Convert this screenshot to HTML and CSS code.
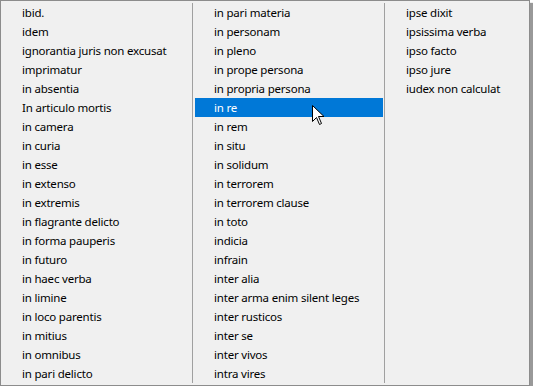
FILE: index.html
```html
<!DOCTYPE html>
<html lang="en">
<head>
    <meta charset="UTF-8">
    <title>Latin Terms</title>
    <link rel="stylesheet" href="styles.css">
</head>
<body>

<div class="listbox">
    <ul class="column">
        <li>ibid.</li>
        <li>idem</li>
        <li>ignorantia juris non excusat</li>
        <li>imprimatur</li>
        <li>in absentia</li>
        <li>In articulo mortis</li>
        <li>in camera</li>
        <li>in curia</li>
        <li>in esse</li>
        <li>in extenso</li>
        <li>in extremis</li>
        <li>in flagrante delicto</li>
        <li>in forma pauperis</li>
        <li>in futuro</li>
        <li>in haec verba</li>
        <li>in limine</li>
        <li>in loco parentis</li>
        <li>in mitius</li>
        <li>in omnibus</li>
        <li>in pari delicto</li>
    </ul>
    <ul class="column">
        <li>in pari materia</li>
        <li>in personam</li>
        <li>in pleno</li>
        <li>in prope persona</li>
        <li>in propria persona</li>
        <li class="selected">in re</li>
        <li>in rem</li>
        <li>in situ</li>
        <li>in solidum</li>
        <li>in terrorem</li>
        <li>in terrorem clause</li>
        <li>in toto</li>
        <li>indicia</li>
        <li>infrain</li>
        <li>inter alia</li>
        <li>inter arma enim silent leges</li>
        <li>inter rusticos</li>
        <li>inter se</li>
        <li>inter vivos</li>
        <li>intra vires</li>
    </ul>
    <ul class="column last">
        <li>ipse dixit</li>
        <li>ipsissima verba</li>
        <li>ipso facto</li>
        <li>ipso jure</li>
        <li>iudex non calculat</li>
    </ul>

    <!-- mouse pointer over the selected row -->
    <svg class="cursor" width="13" height="21" viewBox="0 0 13 21">
        <path d="M0.5 0.5 L0.5 16.5 L4.5 12.5 L7.5 19.5 L9.5 18.5 L6.5 11.5 L12 11.5 Z"
              fill="#fff" stroke="#000" stroke-width="1" stroke-linejoin="miter"/>
    </svg>
</div>

</body>
</html>
```

FILE: styles.css
```css
body {
    margin: 0;
    background-color: #ffffff;
    font-family: "Noto Sans", "Open Sans", sans-serif;
    font-size: 11.5px;
    letter-spacing: -0.2px;
}
.listbox {
    position: relative;
    display: flex;
    box-sizing: border-box;
    width: 530px;
    height: 386px;
    padding-top: 2px;
    overflow: hidden;
    background-color: #f0f0f0;
    border: 1px solid #8c8c8c;
    box-shadow: 3px 3px 1px rgba(0, 0, 0, 0.4);
}
.column {
    list-style: none;
    margin: 0;
    padding: 0 0 0 2px;
    width: 189px;
    height: 380px;
    flex: none;
    border-right: 1px solid #a0a0a0;
}
.column.last {
    border-right: none;
    flex: 1;
}
.column li {
    height: 19px;
    line-height: 19px;
    padding-left: 19px;
    width: 188px;
    box-sizing: border-box;
    color: #000000;
    white-space: nowrap;
}
.column.last li {
    width: auto;
}
.column li.selected {
    background-color: #0078d7;
    color: #ffffff;
}
.cursor {
    position: absolute;
    left: 311px;
    top: 104px;
}
```
